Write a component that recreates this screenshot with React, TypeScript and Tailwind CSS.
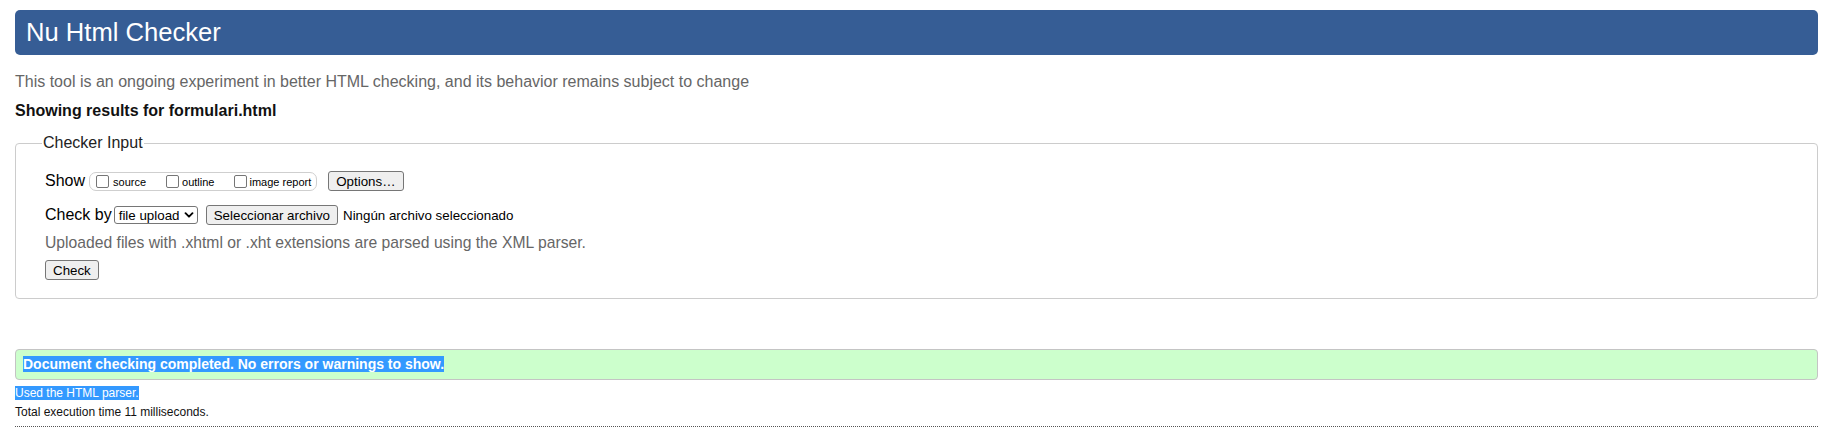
import React from 'react';

const Checkbox: React.FC = () => (
  <span className="block w-[13px] h-[13px] shrink-0 border border-[#767676] rounded-[2px] bg-white" />
);

const NativeButton: React.FC<{ label: string; className?: string }> = ({ label, className = '' }) => (
  <span
    className={`inline-flex items-center h-[20px] border border-[#767676] rounded-[3px] bg-[#efefef] text-[13.33px] leading-[15px] text-black ${className}`}
  >
    {label}
  </span>
);

const ShowOptions: React.FC = () => {
  const options = [
    { label: 'source', gap: 'ml-[4px]', after: 'mr-[20px]' },
    { label: 'outline', gap: 'ml-[3px]', after: 'mr-[20px]' },
    { label: 'image report', gap: 'ml-[2px]', after: '' },
  ];

  return (
    <div className="ml-[4px] h-[19px] flex items-center pl-[6px] pr-[5px] border border-[#cfcfcf] rounded-[7px]">
      {options.map(o => (
        <label key={o.label} className={`flex items-end ${o.after}`}>
          <Checkbox />
          <span className={`${o.gap} text-[11px] leading-[12px] text-black`}>{o.label}</span>
        </label>
      ))}
    </div>
  );
};

export default function App() {
  return (
    <div className="min-h-[429px] bg-white pl-[15px] pr-[9px] pt-[10px] font-['Liberation_Sans',Arial,sans-serif] text-black">
      <h1 className="h-[45px] flex items-center pl-[11px] rounded-[5px] bg-[#365d95] text-white text-[25.6px] leading-[29px] font-normal">
        Nu Html Checker
      </h1>

      <p className="mt-[18px] text-[16px] leading-[18px] text-[#666]">
        This tool is an ongoing experiment in better HTML checking, and its behavior remains subject to change
      </p>

      <p className="mt-[11px] text-[16px] leading-[18px] font-bold text-[#111]">
        Showing results for formulari.html
      </p>

      <fieldset className="mt-[14px] border border-[#cccccc] rounded-[4px] pl-[29px] pb-[18px]">
        <legend className="ml-[-3px] px-[1px] text-[16px] leading-[18px] text-[#222]">Checker Input</legend>

        <div className="mt-[19px] h-[20px] flex items-center">
          <span className="text-[16px] leading-[18px]">Show</span>
          <ShowOptions />
          <NativeButton label="Options…" className="ml-[11px] px-[7px]" />
        </div>

        <div className="mt-[14px] h-[20px] flex items-center">
          <span className="text-[16px] leading-[18px]">Check by</span>
          <div className="ml-[2px] w-[84px] h-[18px] flex items-center justify-between pl-[4px] pr-[3px] border border-[#767676] rounded-[3px] bg-white text-[13.33px] leading-[15px]">
            <span>file upload</span>
            <svg width="10" height="10" viewBox="0 0 10 10" fill="none">
              <path d="M1.5 3.2 L5 6.7 L8.5 3.2" stroke="#000" strokeWidth="1.9" strokeLinecap="round" strokeLinejoin="round" />
            </svg>
          </div>
          <NativeButton label="Seleccionar archivo" className="ml-[8px] px-[7px]" />
          <span className="ml-[5px] text-[13.33px] leading-[15px]">Ningún archivo seleccionado</span>
        </div>

        <p className="mt-[9px] text-[15.7px] leading-[18px] text-[#666]">
          Uploaded files with .xhtml or .xht extensions are parsed using the XML parser.
        </p>

        <div className="mt-[8px] flex">
          <NativeButton label="Check" className="px-[7px]" />
        </div>
      </fieldset>

      <div className="mt-[50px] border border-[#c4c4c4] rounded-[4px] bg-[#ccffcc] pl-[7px] pt-[6px] pb-[7px]">
        <p className="text-[14px] leading-[16px] font-bold">
          <span className="bg-[#3399ff] text-white">Document checking completed. No errors or warnings to show. </span>
        </p>
      </div>

      <p className="mt-[6px] text-[12px] leading-[14px]">
        <span className="bg-[#3399ff] text-white">Used the HTML parser.</span>
      </p>

      <p className="mt-[5px] text-[12px] leading-[14px] text-[#111]">Total execution time 11 milliseconds.</p>

      <div className="mt-[7px] border-b border-dotted border-[#555]" />
    </div>
  );
}
